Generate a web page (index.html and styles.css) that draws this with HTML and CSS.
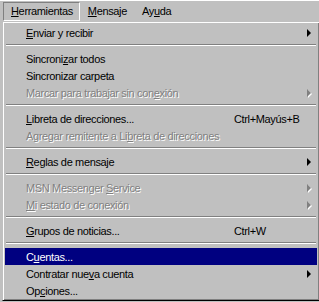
FILE: index.html
```html
<!DOCTYPE html>
<html lang="es">
<head>
    <meta charset="utf-8">
    <title>Herramientas</title>
    <link rel="stylesheet" href="styles.css">
</head>
<body>
    <div class="menubar">
        <div class="topItem open"><u>H</u>erramientas</div>
        <div class="topItem"><u>M</u>ensaje</div>
        <div class="topItem">Ay<u>u</u>da</div>
    </div>
    <div class="popup">
        <div class="item"><span><u>E</u>nviar y recibir</span><span></span><span class="arrow"></span></div>
        <div class="sep"></div>
        <div class="item"><span>Sincroni<u>z</u>ar todos</span></div>
        <div class="item"><span>Sincronizar carpeta</span></div>
        <div class="item off"><span>Marcar para trabajar sin con<u>e</u>xión</span><span></span><span class="arrow"></span></div>
        <div class="sep"></div>
        <div class="item"><span><u>L</u>ibreta de direcciones...</span><span>Ctrl+Mayús+B</span></div>
        <div class="item off"><span>Agregar remitente a Li<u>b</u>reta de direcciones</span></div>
        <div class="sep"></div>
        <div class="item"><span><u>R</u>eglas de mensaje</span><span></span><span class="arrow"></span></div>
        <div class="sep"></div>
        <div class="item off"><span>MSN Messenger <u>S</u>ervice</span><span></span><span class="arrow"></span></div>
        <div class="item off"><span><u>M</u>i estado de conexión</span><span></span><span class="arrow"></span></div>
        <div class="sep"></div>
        <div class="item"><span><u>G</u>rupos de noticias...</span><span>Ctrl+W</span></div>
        <div class="sep"></div>
        <div class="item active"><span>C<u>u</u>entas...</span></div>
        <div class="item"><span>Contratar nue<u>v</u>a cuenta</span><span></span><span class="arrow"></span></div>
        <div class="item"><span>Op<u>c</u>iones...</span></div>
    </div>
</body>
</html>
```

FILE: styles.css
```css
body{
    margin: 0;
    background-color: #c0c0c0;
    font-family: "Liberation Sans", Arial, sans-serif;
    font-size: 11px;
    letter-spacing: -0.35px;
    color: #000;
    overflow: hidden;
}
u{
    text-decoration-thickness: 1px;
    text-underline-offset: 1px;
}
.menubar{
    display: flex;
    border-top: 1px solid #fff;
    padding: 1px 0 0 3px;
    height: 19px;
}
.topItem{
    height: 17px;
    line-height: 17px;
    padding: 0 6px 0 7px;
    border: 1px solid transparent;
}
.topItem.open{
    border-color: #808080 #fff #fff #808080;
}
.popup{
    margin-left: 2px;
    width: 312px;
    border: 1px solid;
    border-color: #c0c0c0 #000 #000 #c0c0c0;
    box-shadow: inset 1px 1px #fff, inset -1px -1px #808080;
    padding: 2px 2px 1px 2px;
}
.item{
    display: grid;
    grid-template-columns: 208px 73px 10px;
    align-items: center;
    height: 17px;
    padding-left: 21px;
    white-space: nowrap;
}
.item.off{
    color: #808080;
    text-shadow: 1px 1px 0 #fff;
}
.item.active{
    background-color: #000080;
    color: #fff;
}
.arrow{
    width: 0;
    height: 0;
    border-top: 4px solid transparent;
    border-bottom: 4px solid transparent;
    border-left: 4px solid #000;
}
.item.off .arrow{
    border-left-color: #808080;
    filter: drop-shadow(1px 1px 0 #fff);
}
.sep{
    height: 0;
    margin: 3px 1px 4px 1px;
    border-top: 1px solid #808080;
    border-bottom: 1px solid #fff;
}
```
